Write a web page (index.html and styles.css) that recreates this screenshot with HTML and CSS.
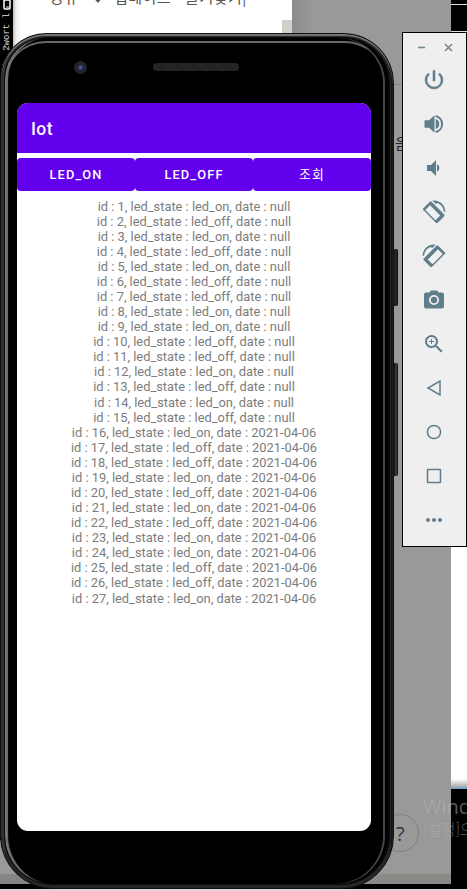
FILE: index.html
```
<!DOCTYPE html>
<html lang="ko">
<head>
<meta charset="utf-8">
<title>Iot</title>
<link rel="stylesheet" href="styles.css">
</head>
<body>
<div class="desktop">
  <div class="terminal"><svg class="device-icon" width="9" height="11" viewBox="0 0 9 11"><rect x="1" y="0" width="6" height="9" rx="1" fill="#000" stroke="#fff" stroke-width="1.5"/><path d="M3 7h3" stroke="#fff"/></svg><span>l) ,2wort l</span></div>
  <div class="editor"></div>
  <div class="browser"><span>공유</span><span class="heart">♥</span><span>업데이트</span><span class="favorites">즐겨찾기</span><span>|</span><span class="dots">···</span></div>
  <div class="scrollbar"></div>
  <div class="backdrop"><div class="rule"></div><span class="fragment">음</span><div class="help">?</div></div>
  <div class="backdrop-left"></div>
  <div class="taskbar"></div>
  <div class="watermark"><div class="watermark-title">Windows</div><div>[설정]으로</div></div>

  <div class="side-key power-key"></div>
  <div class="side-key volume-key"></div>
  <main class="phone">
    <div class="bezel">
      <div class="camera"></div>
      <div class="speaker"></div>
      <section class="screen">
        <header class="app-bar">Iot</header>
        <div class="buttons"><button>LED_ON</button><button>LED_OFF</button><button class="query">조회</button></div>
        <div class="log">
          <div>id : 1, led_state : led_on, date : null</div>
          <div>id : 2, led_state : led_off, date : null</div>
          <div>id : 3, led_state : led_on, date : null</div>
          <div>id : 4, led_state : led_off, date : null</div>
          <div>id : 5, led_state : led_on, date : null</div>
          <div>id : 6, led_state : led_off, date : null</div>
          <div>id : 7, led_state : led_off, date : null</div>
          <div>id : 8, led_state : led_on, date : null</div>
          <div>id : 9, led_state : led_on, date : null</div>
          <div>id : 10, led_state : led_off, date : null</div>
          <div>id : 11, led_state : led_off, date : null</div>
          <div>id : 12, led_state : led_on, date : null</div>
          <div>id : 13, led_state : led_off, date : null</div>
          <div>id : 14, led_state : led_on, date : null</div>
          <div>id : 15, led_state : led_off, date : null</div>
          <div>id : 16, led_state : led_on, date : 2021-04-06</div>
          <div>id : 17, led_state : led_off, date : 2021-04-06</div>
          <div>id : 18, led_state : led_off, date : 2021-04-06</div>
          <div>id : 19, led_state : led_on, date : 2021-04-06</div>
          <div>id : 20, led_state : led_off, date : 2021-04-06</div>
          <div>id : 21, led_state : led_on, date : 2021-04-06</div>
          <div>id : 22, led_state : led_off, date : 2021-04-06</div>
          <div>id : 23, led_state : led_on, date : 2021-04-06</div>
          <div>id : 24, led_state : led_on, date : 2021-04-06</div>
          <div>id : 25, led_state : led_off, date : 2021-04-06</div>
          <div>id : 26, led_state : led_off, date : 2021-04-06</div>
          <div>id : 27, led_state : led_on, date : 2021-04-06</div>
        </div>
      </section>
    </div>
  </main>

  <aside class="toolbar">
    <div class="window-controls">
      <svg width="9" height="9" viewBox="0 0 9 9"><path d="M1 4.500h7"/></svg>
      <svg width="9" height="9" viewBox="0 0 9 9"><path d="M1 1l7 7M8 1L1 8"/></svg>
    </div>
    <div class="tools">
      <svg viewBox="0 0 24 24"><path d="M13 2.500h-2v10.500h2V2.500zm4.830 2.670l-1.420 1.420A6.920 6.920 0 0 1 19 12a7 7 0 1 1-11.420-5.420L6.170 5.170A8.930 8.930 0 0 0 3 12a9 9 0 0 0 18 0 8.930 8.930 0 0 0-3.170-6.830z" stroke="#607d8b" stroke-width=".5"/></svg>
      <svg viewBox="0 0 24 24"><path d="M2.500 8.300v7.400h4.500l5.500 5V3.300L7 8.300H2.500zM13.700 7v10a5.300 5.300 0 0 0 0-10z"/><path class="line bold" d="M13.700 4a8.200 8.200 0 0 1 0 16"/></svg>
      <svg viewBox="0 0 24 24"><path d="M5 9v6h4l5 5V4L9 9H5zm10-1v8a4.500 4.500 0 0 0 0-8z"/></svg>
      <svg viewBox="0 0 24 24"><g id="rotate"><path d="M7.800 1.800L1.300 8.300a1.300 1.300 0 0 0 0 1.800l12.600 12.600a1.300 1.300 0 0 0 1.800 0l6.500-6.500a1.300 1.300 0 0 0 0-1.800L9.600 1.800a1.300 1.300 0 0 0-1.800 0zm.2 3.500l10.200 10.200-4.700 4.700L3.300 10z" fill-rule="evenodd"/><path d="M10.500.700c7-1.200 12.700 4.500 12.900 11h-1.500c-.3-4.200-3-7.600-6.600-8.800l-1.500 1.200z"/></g></svg>
      <svg viewBox="0 0 24 24"><use href="#rotate" transform="translate(24 0) scale(-1 1)"/></svg>
      <svg viewBox="0 0 24 24"><path d="M9 2.500L7.170 4.500H4a2 2 0 0 0-2 2v12a2 2 0 0 0 2 2h16a2 2 0 0 0 2-2v-12a2 2 0 0 0-2-2h-3.170L15 2.500H9zM12 17a5 5 0 1 0 0-10 5 5 0 0 0 0 10z" fill-rule="evenodd"/><circle cx="12" cy="12" r="3.200"/></svg>
      <svg viewBox="0 0 24 24"><path d="M15.500 14h-.79l-.28-.27A6.500 6.500 0 1 0 13.730 14.430l.27.28v.79l5 5 1.500-1.500-5-5zm-6 0a4.500 4.500 0 1 1 0-9 4.500 4.500 0 0 1 0 9zM12 10h-2v2H9v-2H7V9h2V7h1v2h2v1z"/></svg>
      <svg viewBox="0 0 24 24"><path class="line" d="M18 5v14L6 12z"/></svg>
      <svg viewBox="0 0 24 24"><circle class="line" cx="12" cy="12" r="6.600"/></svg>
      <svg viewBox="0 0 24 24"><rect class="line" x="5.500" y="5.500" width="13" height="13" rx=".5"/></svg>
      <svg viewBox="0 0 24 24"><circle cx="6" cy="12" r="2"/><circle cx="12" cy="12" r="2"/><circle cx="18" cy="12" r="2"/></svg>
    </div>
  </aside>
</div>
</body>
</html>
```
FILE: styles.css
```
* { box-sizing: border-box; }
body { margin: 0; font-family: Roboto, "Noto Sans CJK KR", sans-serif; }
.desktop { position: relative; width: 467px; height: 891px; overflow: hidden; background: #000; }
.terminal { position: absolute; left: 0; top: 0; width: 13px; height: 90px; color: #ddd; font: 9px/12px "Liberation Mono", monospace; writing-mode: vertical-rl; white-space: nowrap; overflow: hidden; }
.terminal span { display: inline-block; margin-top: -1px; transform: rotate(180deg); }
.device-icon { display: inline-block; margin: 0 0 3px; }
.editor { position: absolute; left: 451px; top: 4px; width: 16px; height: 785px; border-top: 1px solid #ddd; background: linear-gradient(#000 0 26px, #ddd 26px 27px, #fff 27px 774px, #aaa 782px, #6fa7d3 783px); }
.browser { position: absolute; left: 13px; top: 0; width: 279px; height: 100px; padding-left: 37px; display: flex; background: linear-gradient(90deg, #bbb, #eee 3px, #fff 9px); color: #555; font: 15px/20px "Noto Sans CJK KR", sans-serif; letter-spacing: .5px; white-space: nowrap; overflow: hidden; }
.browser span { margin-top: -13px; }
.browser .heart { margin-top: -11px; margin-left: 14px; margin-right: 10px; font-family: "DejaVu Sans"; font-size: 12px; }
.browser .favorites { margin-left: 14px; }
.browser .dots { margin-top: -11px; margin-left: 10px; letter-spacing: 2px; color: #999; }
.scrollbar { position: absolute; left: 282px; top: 20px; width: 10px; height: 30px; background: #cfd0ca; }
.backdrop { position: absolute; left: 292px; top: 0; width: 159px; height: 884px; background: linear-gradient(transparent 874px, #898986 874px), linear-gradient(90deg, #8b8b8b, #999 20px); }
.rule { position: absolute; left: 0; top: 84px; width: 159px; height: 1px; background: #888; }
.fragment { position: absolute; left: 103px; top: 133px; font: 15px/20px "Noto Sans CJK KR"; color: #222; }
.help { position: absolute; left: 89px; top: 814px; width: 38px; height: 38px; border: 1px solid #808080; border-radius: 50%; padding-left: 14px; font: 20px/37px "Open Sans"; color: #333; }
.backdrop-left { position: absolute; left: 0; top: 840px; width: 30px; height: 44px; background: linear-gradient(#999 34px, #858583 34px); }
.taskbar { position: absolute; left: 0; top: 889px; width: 467px; height: 2px; background: #d8d6d6; }
.watermark { position: absolute; left: 423px; top: 795px; width: 44px; overflow: hidden; color: rgba(180,180,180,.5); font: 300 15px/20px "Noto Sans CJK KR"; white-space: nowrap; }
.watermark-title { font: 20px/24px "Open Sans"; }
.side-key { position: absolute; left: 391px; width: 7px; background: #252525; border-right: 1px solid #111; border-radius: 2px; }
.power-key { top: 249px; height: 57px; }
.volume-key { top: 363px; height: 113px; background: linear-gradient(90deg, #171717 4px, #555 5px, #222); }
.phone { position: absolute; left: 0; top: 33px; width: 394px; height: 856px; border: 1px solid #111; border-radius: 46px 50px 53px 53px; padding: 3px; background: linear-gradient(90deg, #222, #383838 3px, #252525 5px, #252525 388px, #111); box-shadow: inset 0 2px 1px #777; }
.bezel { position: relative; height: 848px; border: 1px solid #0a0a0a; border-radius: 42px 46px 49px 49px; padding: 65px 18px 53px 12px; background: #000; box-shadow: inset 4px 0 1px -1px #74777b, inset -1px 0 #070707, inset -4px 0 #000, inset -6px 0 #44454a, inset 0 3px #000, inset 0 5px #66676a; }
.camera { position: absolute; left: 69px; top: 23px; width: 13px; height: 13px; border-radius: 50%; background: radial-gradient(circle, #44528b 0 1px, #20233e 3px, #242424 5px); }
.speaker { position: absolute; left: 148px; top: 25px; width: 86px; height: 8px; border-radius: 4px; background: repeating-linear-gradient(45deg, #292929 0 1px, #1e1e1e 1px 2px); }
.screen { width: 354px; height: 728px; border-radius: 11px; overflow: hidden; background: #fff; }
.app-bar { height: 50px; padding-left: 14px; color: #faf5ff; background: #6200ee; font: 500 17.500px/52px Roboto; letter-spacing: .4px; }
.buttons { display: grid; grid-template-columns: repeat(3, 1fr); padding-top: 5px; }
.buttons button { height: 33px; border: 0; border-radius: 4px; padding: 1px 0 0; color: #fff; background: #6200ee; font: 500 12.800px/32px Roboto, "Noto Sans CJK KR"; letter-spacing: 1.150px; }
.buttons .query { font-weight: 400; }
.log { padding-top: 7.500px; color: #7c7c7c; font-size: 12.860px; line-height: 15.080px; text-align: center; white-space: nowrap; }
.toolbar { position: absolute; left: 402px; top: 32px; width: 65px; height: 515px; border: 1px solid #000; background: #efefef; }
.window-controls { display: flex; justify-content: center; gap: 18px; height: 25px; padding-top: 10px; }
.window-controls path { stroke: #6e858f; stroke-width: 1.500; fill: none; }
.tools { display: grid; grid-auto-rows: 44px; justify-items: center; align-items: center; padding-right: 1px; }
.tools svg { width: 24px; height: 24px; fill: #607d8b; overflow: visible; }
.tools .line { fill: none; stroke: #607d8b; stroke-width: 1.500; }
.tools .bold { stroke-width: 2; }
```
